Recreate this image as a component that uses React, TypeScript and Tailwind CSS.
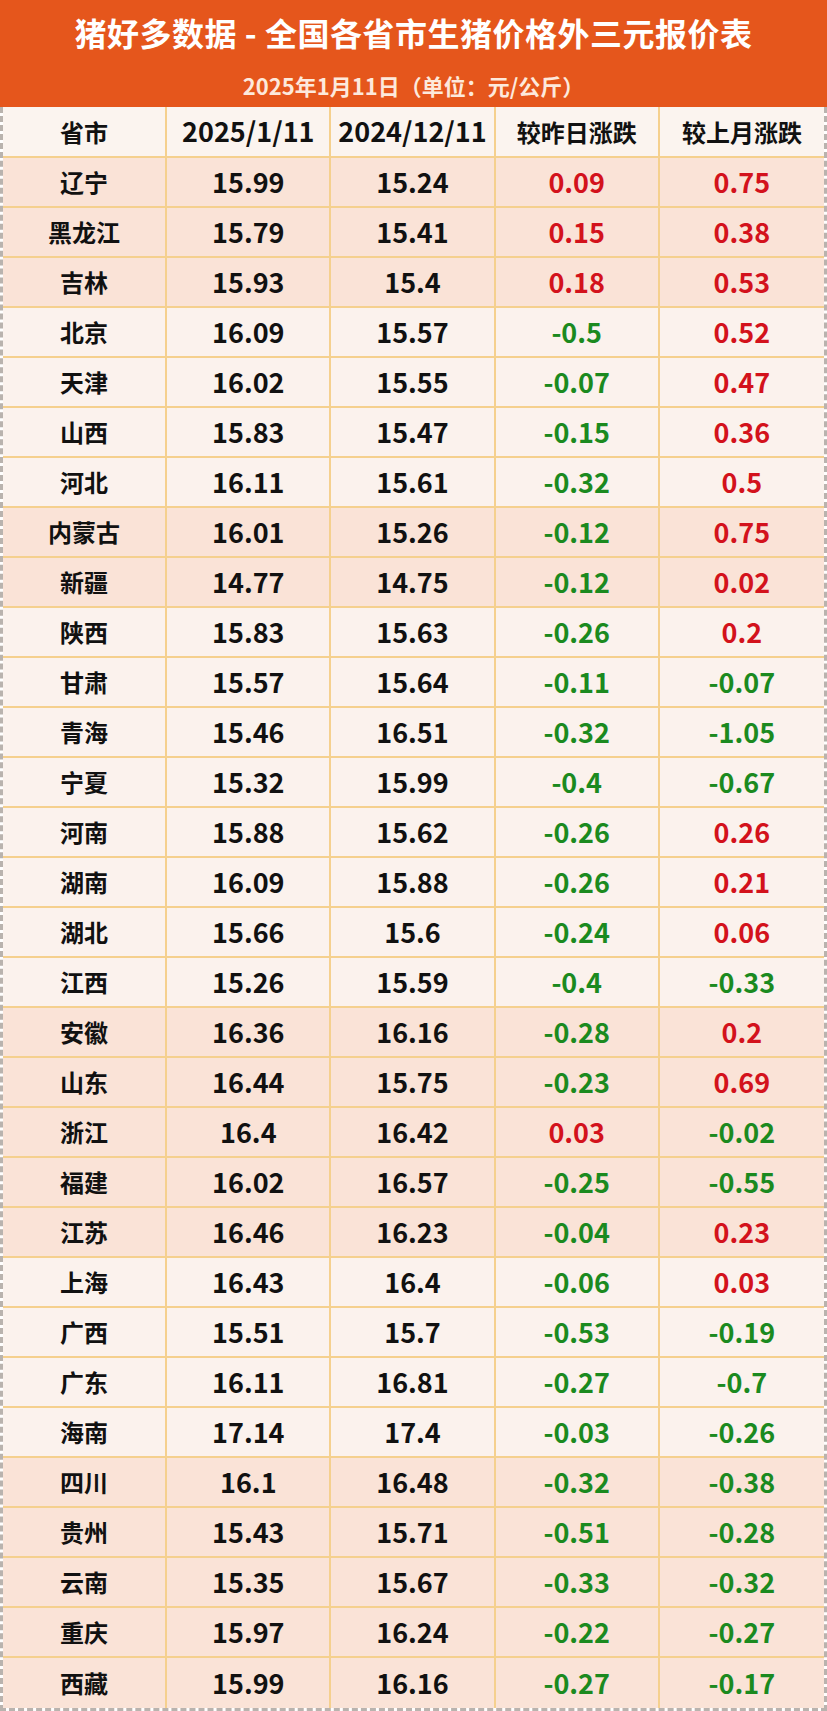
import React from "react";

interface PriceRow {
  name: string;
  today: string;
  lastMonth: string;
  dayChange: string;
  monthChange: string;
  pink: boolean;
}

// 省市, 2025/1/11, 2024/12/11, 较昨日涨跌, 较上月涨跌, pink background
const raw: [string, string, string, string, string, boolean][] = [
  ["辽宁", "15.99", "15.24", "0.09", "0.75", true],
  ["黑龙江", "15.79", "15.41", "0.15", "0.38", true],
  ["吉林", "15.93", "15.4", "0.18", "0.53", true],
  ["北京", "16.09", "15.57", "-0.5", "0.52", false],
  ["天津", "16.02", "15.55", "-0.07", "0.47", false],
  ["山西", "15.83", "15.47", "-0.15", "0.36", false],
  ["河北", "16.11", "15.61", "-0.32", "0.5", false],
  ["内蒙古", "16.01", "15.26", "-0.12", "0.75", true],
  ["新疆", "14.77", "14.75", "-0.12", "0.02", true],
  ["陕西", "15.83", "15.63", "-0.26", "0.2", false],
  ["甘肃", "15.57", "15.64", "-0.11", "-0.07", false],
  ["青海", "15.46", "16.51", "-0.32", "-1.05", false],
  ["宁夏", "15.32", "15.99", "-0.4", "-0.67", false],
  ["河南", "15.88", "15.62", "-0.26", "0.26", false],
  ["湖南", "16.09", "15.88", "-0.26", "0.21", false],
  ["湖北", "15.66", "15.6", "-0.24", "0.06", false],
  ["江西", "15.26", "15.59", "-0.4", "-0.33", false],
  ["安徽", "16.36", "16.16", "-0.28", "0.2", true],
  ["山东", "16.44", "15.75", "-0.23", "0.69", true],
  ["浙江", "16.4", "16.42", "0.03", "-0.02", true],
  ["福建", "16.02", "16.57", "-0.25", "-0.55", true],
  ["江苏", "16.46", "16.23", "-0.04", "0.23", true],
  ["上海", "16.43", "16.4", "-0.06", "0.03", false],
  ["广西", "15.51", "15.7", "-0.53", "-0.19", false],
  ["广东", "16.11", "16.81", "-0.27", "-0.7", false],
  ["海南", "17.14", "17.4", "-0.03", "-0.26", false],
  ["四川", "16.1", "16.48", "-0.32", "-0.38", true],
  ["贵州", "15.43", "15.71", "-0.51", "-0.28", true],
  ["云南", "15.35", "15.67", "-0.33", "-0.32", true],
  ["重庆", "15.97", "16.24", "-0.22", "-0.27", true],
  ["西藏", "15.99", "16.16", "-0.27", "-0.17", true],
];

const rows: PriceRow[] = raw.map(r => ({
  name: r[0],
  today: r[1],
  lastMonth: r[2],
  dayChange: r[3],
  monthChange: r[4],
  pink: r[5],
}));

const font = { fontFamily: '"Noto Sans CJK SC", "Noto Sans", sans-serif' };

const ChangeCell: React.FC<{ value: string; last?: boolean }> = ({ value, last }) => {
  const down = value.startsWith("-");
  return (
    <div
      className={`flex items-center justify-center text-[27px] font-bold ${down ? "text-[#1b8a1f]" : "text-[#d3121c]"} ${last ? "" : "border-r-2 border-[#f5d08e]"}`}
    >
      {value}
    </div>
  );
};

export default function App() {
  return (
    <div className="w-[827px] bg-white" style={font}>
      <div className="h-[107px] bg-[#e5561c] flex flex-col items-center">
        <h1 className="mt-[10px] text-[32px] leading-[44px] font-bold text-white tracking-[0.5px]">
          猪好多数据 - 全国各省市生猪价格外三元报价表
        </h1>
        <p className="mt-[17px] text-[22px] leading-[28px] font-bold text-[#fde9dc]">
          2025年1月11日（单位：元/公斤）
        </p>
      </div>
      <div className="border-x-[3px] border-b-[3px] border-dashed border-[#b9b3ae]">
        <div className="grid grid-cols-5 h-[51px] bg-[#fbf4ef] border-b-2 border-[#f5d08e] text-[24px] font-bold text-[#111]">
          <div className="flex items-center justify-center border-r-2 border-[#f5d08e]">省市</div>
          <div className="flex items-center justify-center border-r-2 border-[#f5d08e] text-[27px]">2025/1/11</div>
          <div className="flex items-center justify-center border-r-2 border-[#f5d08e] text-[27px]">2024/12/11</div>
          <div className="flex items-center justify-center border-r-2 border-[#f5d08e]">较昨日涨跌</div>
          <div className="flex items-center justify-center">较上月涨跌</div>
        </div>
        {rows.map((row, i) => (
          <div
            key={row.name}
            className={`grid grid-cols-5 h-[50px] ${i < rows.length - 1 ? "border-b-2 border-[#f5d08e]" : ""} ${row.pink ? "bg-[#fae3d7]" : "bg-[#fbf2ed]"}`}
          >
            <div className="flex items-center justify-center border-r-2 border-[#f5d08e] text-[24px] font-bold text-[#111]">
              {row.name}
            </div>
            <div className="flex items-center justify-center border-r-2 border-[#f5d08e] text-[27px] font-bold text-[#111]">
              {row.today}
            </div>
            <div className="flex items-center justify-center border-r-2 border-[#f5d08e] text-[27px] font-bold text-[#111]">
              {row.lastMonth}
            </div>
            <ChangeCell value={row.dayChange} />
            <ChangeCell value={row.monthChange} last />
          </div>
        ))}
      </div>
    </div>
  );
}
